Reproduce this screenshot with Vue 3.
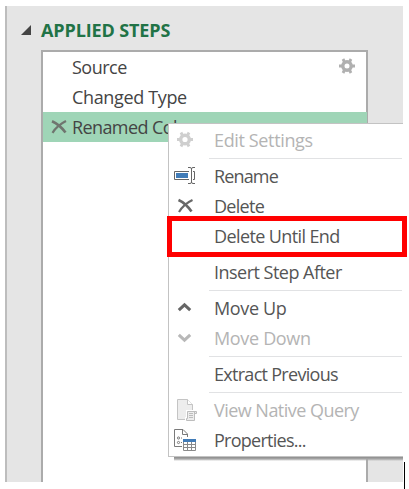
<script setup>
const steps = [
  { name: 'Source', gear: true, spacing: -0.5 },
  { name: 'Changed Type', spacing: -0.35 },
  { name: 'Renamed Columns', selected: true, spacing: -0.6 }
]

const groups = [
  [{ label: 'Edit Settings', icon: 'gear', disabled: true, spacing: -0.36 }],
  [
    { label: 'Rename', icon: 'rename', spacing: -0.85 },
    { label: 'Delete', icon: 'delete', spacing: -0.7 },
    { label: 'Delete Until End', marked: true, spacing: -0.61 }
  ],
  [{ label: 'Insert Step After', spacing: -0.52 }],
  [
    { label: 'Move Up', icon: 'up', spacing: -0.35 },
    { label: 'Move Down', icon: 'down', disabled: true, spacing: -0.33 }
  ],
  [{ label: 'Extract Previous', spacing: -0.71 }],
  [
    { label: 'View Native Query', icon: 'query', disabled: true, spacing: -0.53 },
    { label: 'Properties...', icon: 'properties', spacing: -0.73 }
  ]
]
</script>

<template>
  <div class="page">
    <section class="panel">
      <header class="heading">
        <svg class="arrow" width="10" height="10" viewBox="0 0 10 10"><path d="M10 0V10H0Z" fill="#444" /></svg>
        <h2>APPLIED STEPS</h2>
      </header>
      <ul class="steps">
        <li v-for="s in steps" :key="s.name" :class="{ selected: s.selected }">
          <span class="remove">
            <svg v-if="s.selected" width="16" height="14" viewBox="0 0 16 14" fill="none" stroke="#6f756f">
              <path d="M1 1.3C6 3.5 11 8 14.5 12.5" stroke-width="2.7" />
              <path d="M15 1C9 4 4.5 8 1.5 12.8" stroke-width="2.2" />
            </svg>
          </span>
          <span class="name" :style="{ letterSpacing: s.spacing + 'px' }">{{ s.name }}</span>
          <svg v-if="s.gear" class="gear" width="16" height="16" viewBox="0 0 16 16" fill="none" stroke="#b0b0b0">
            <circle cx="8" cy="8" r="4.2" stroke-width="3.4" />
            <path d="M0 8H3M13 8H16M4 1L5.5 4M10.5 12L12 15M12 1L10.5 4M5.5 12L4 15" stroke-width="2.8" />
          </svg>
        </li>
      </ul>
    </section>

    <nav class="menu">
      <div v-for="(g, i) in groups" :key="i" class="group">
        <div
          v-for="item in g"
          :key="item.label"
          class="item"
          :class="{ disabled: item.disabled, marked: item.marked }"
        >
          <span class="icon">
            <svg v-if="item.icon === 'gear'" width="24" height="24" viewBox="0 0 24 24" fill="none" stroke="#cfcfcf">
              <circle cx="12" cy="10.5" r="4.3" stroke-width="3.4" />
              <path d="M4 10.5H7M17 10.5H20M8 3.5L9.5 6.5M14.5 14.5L16 17.5M16 3.5L14.5 6.5M9.5 14.5L8 17.5" stroke-width="2.8" />
            </svg>
            <svg v-else-if="item.icon === 'rename'" width="24" height="24" viewBox="0 0 24 24" fill="none" stroke="#666">
              <path d="M16 6.5H1.5V14.5H16M20 6.5H21.5V14.5H20" />
              <path d="M3 8H15V13H3Z" fill="#417cb8" stroke="none" />
              <path d="M15 2.5H17Q18.5 2.5 18.5 4V17Q18.5 18.5 17 18.5H15M22 2.5H20Q18.5 2.5 18.5 4V17Q18.5 18.5 20 18.5H22" />
            </svg>
            <svg v-else-if="item.icon === 'delete'" width="24" height="24" viewBox="0 0 24 24" fill="none" stroke="#686868">
              <path d="M5.5 5C10 7 15 11.5 18.5 16.5" stroke-width="2.7" />
              <path d="M19.5 5C13 8 9 12 6 17" stroke-width="2.2" />
            </svg>
            <svg v-else-if="item.icon === 'up'" width="24" height="24" viewBox="0 0 24 24" fill="none" stroke="#666">
              <path d="M5.8 13.2L11.5 7.8L17.2 13.2" stroke-width="3" />
            </svg>
            <svg v-else-if="item.icon === 'down'" width="24" height="24" viewBox="0 0 24 24" fill="none" stroke="#b8b8b8">
              <path d="M5.8 7.8L11.5 13.2L17.2 7.8" stroke-width="3" />
            </svg>
            <svg v-else-if="item.icon === 'query'" width="24" height="24" viewBox="0 0 24 24" fill="#ededed" stroke="#c4c4c4">
              <path d="M4.5 .5H14.5L19.5 5.5V20.5H4.5Z" />
              <path d="M14.5 .5V5.5H19.5" fill="#fff" />
              <path d="M13 11H24V23H12V18H13Z" fill="#fff" stroke="none" />
              <path d="M14.5 12.5H23.5V14.5H21.5V21.5H13.5V19.5H14.5ZM21.5 12.5V15M16 14.5H20M16 16.5H20M16 18.5H20" stroke="#bdbdbd" />
            </svg>
            <svg v-else-if="item.icon === 'properties'" width="24" height="24" viewBox="0 0 24 24" fill="none" stroke="#7a7a7a">
              <path d="M9 17.5H1.5V.5H10L14.5 5V8" fill="#fff" />
              <path d="M9.5 .5V5.5H14.5" />
              <circle cx="5.5" cy="9" r="1.1" /><circle cx="5.5" cy="13.5" r="1.1" />
              <path d="M8 9H9M8 13.5H9" />
              <path d="M9 9H23V22H9Z" fill="#fff" stroke="none" />
              <path d="M10.5 12V21.5H22.5V12M10 15.5H23M10 18.5H23M14.5 13V21.5M18.5 13V21.5" stroke="#8a8a8a" />
              <path d="M10 10H23V13H10Z" fill="#417cb8" stroke="none" />
            </svg>
          </span>
          <span class="label" :style="{ letterSpacing: item.spacing + 'px' }">{{ item.label }}</span>
        </div>
      </div>
    </nav>
    <i class="caret"></i>
  </div>
</template>

<style>
body {
  margin: 0;
  background: #fff;
}
</style>

<style scoped>
.page {
  position: relative;
  box-sizing: border-box;
  width: 409px;
  height: 489px;
  padding: 6px 6px 7px 5px;
  overflow: hidden;
  font: 18px/30px "Open Sans", "Noto Sans", sans-serif;
  color: #444;
}
.panel {
  display: flex;
  flex-direction: column;
  box-sizing: border-box;
  height: 476px;
  padding-right: 35px;
  border-left: 2px solid #bdbdbd;
  background: #e5e5e5;
}
.heading {
  display: flex;
  align-items: center;
  gap: 10px;
  height: 44px;
  padding-left: 14px;
}
.arrow {
  margin-top: 3px;
}
h2 {
  margin: 3px 0 0;
  font-size: 18px;
  font-weight: 700;
  line-height: 30px;
  letter-spacing: -0.12px;
  color: #217346;
  white-space: nowrap;
}
.steps {
  flex: 1;
  margin: 0 0 0 34px;
  padding: 0;
  list-style: none;
  background: #fff;
  border: 2px solid #ababab;
  border-bottom: 0;
}
.steps li {
  display: flex;
  align-items: center;
  height: 30px;
}
.steps .selected {
  margin-right: -1px;
  background: #9fd5b7;
}
.remove {
  display: flex;
  width: 21px;
  padding-left: 8px;
}
.name {
  flex: 1;
  white-space: nowrap;
}
.gear {
  margin-right: 11px;
  margin-top: -2px;
}
.menu {
  position: absolute;
  left: 168px;
  top: 123px;
  box-sizing: border-box;
  width: 235px;
  height: 334px;
  padding: 2px 0 0;
  background: #fff;
  border: 1px solid #c3c3c3;
  border-right: 0;
  color: #555;
}
.menu::after {
  content: "";
  position: absolute;
  left: 5px;
  right: 0;
  top: 333px;
  height: 4px;
  background: linear-gradient(#8c8c8c, #a8a8a8 50%, rgba(200, 200, 200, 0));
}
.group + .group::before {
  content: "";
  display: block;
  height: 1px;
  margin: 2px 1px 3px 40px;
  background: #e1e2e4;
}
.item {
  position: relative;
  display: flex;
  align-items: center;
  height: 30px;
}
.icon {
  display: flex;
  width: 41px;
  padding-left: 4px;
  height: 24px;
}
.label {
  padding-bottom: 2px;
  white-space: nowrap;
}
.disabled {
  color: #b4b4b4;
}
.marked::after {
  content: "";
  position: absolute;
  z-index: 1;
  left: -2px;
  top: -6px;
  box-sizing: border-box;
  width: 240px;
  height: 41px;
  border: 5px solid #f00;
}
.caret {
  position: absolute;
  left: 404px;
  top: 462px;
  width: 1px;
  height: 27px;
  background: #000;
}
</style>
